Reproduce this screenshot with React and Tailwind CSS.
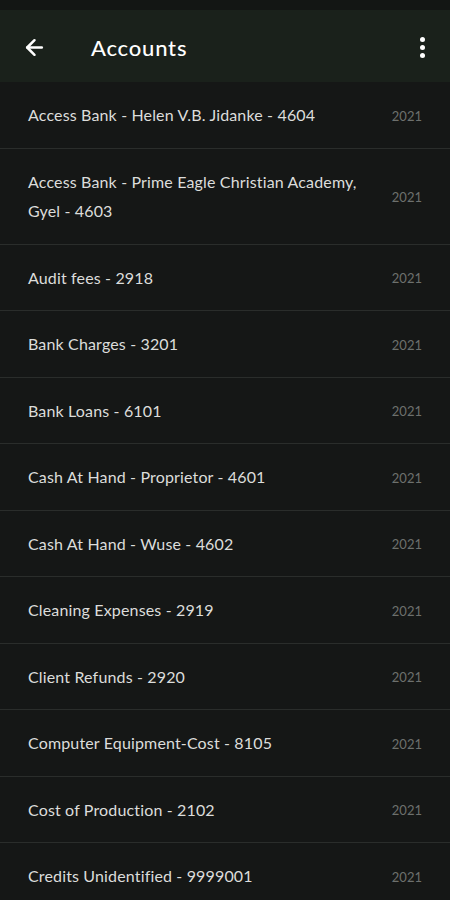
import { ArrowLeft } from "lucide-react";

const accounts = [
  "Access Bank - Helen V.B. Jidanke - 4604",
  "Access Bank - Prime Eagle Christian Academy, Gyel - 4603",
  "Audit fees - 2918",
  "Bank Charges - 3201",
  "Bank Loans - 6101",
  "Cash At Hand - Proprietor - 4601",
  "Cash At Hand - Wuse - 4602",
  "Cleaning Expenses - 2919",
  "Client Refunds - 2920",
  "Computer Equipment-Cost - 8105",
  "Cost of Production - 2102",
  "Credits Unidentified - 9999001",
];

export default function App() {
  return (
    <div
      className="flex flex-col h-[900px] overflow-hidden bg-[#151716] text-[#e2e3e1]"
      style={{ fontFamily: "Lato, 'Noto Sans', sans-serif" }}
    >
      <div className="h-[10px] shrink-0 bg-[#131614]" />
      <header className="flex shrink-0 items-center h-[72px] bg-[#1a211b] pt-[3px] pl-[22px] pr-[25px]">
        <ArrowLeft size={25} strokeWidth={2.4} className="text-white" />
        <h1 className="ml-[44px] text-[22px] tracking-[0.8px] font-medium text-white">Accounts</h1>
        <div className="ml-auto flex flex-col gap-[3px] items-center">
          <span className="w-[5px] h-[5px] rounded-full bg-white" />
          <span className="w-[5px] h-[5px] rounded-full bg-white" />
          <span className="w-[5px] h-[5px] rounded-full bg-white" />
        </div>
      </header>
      <ul className="flex flex-col shrink-0">
        {accounts.map((name) => (
          <li
            key={name}
            className="flex items-center border-b border-[#2a2d2b] pl-[28px] pr-[28px] py-[18px]"
          >
            <span className="flex-1 pr-[20px] text-[16px] tracking-[0.15px] leading-[29.5px] text-[#dcdddb]">
              {name}
            </span>
            <span className="mt-[3px] text-[13px] text-[#6d706d]">2021</span>
          </li>
        ))}
      </ul>
    </div>
  );
}
